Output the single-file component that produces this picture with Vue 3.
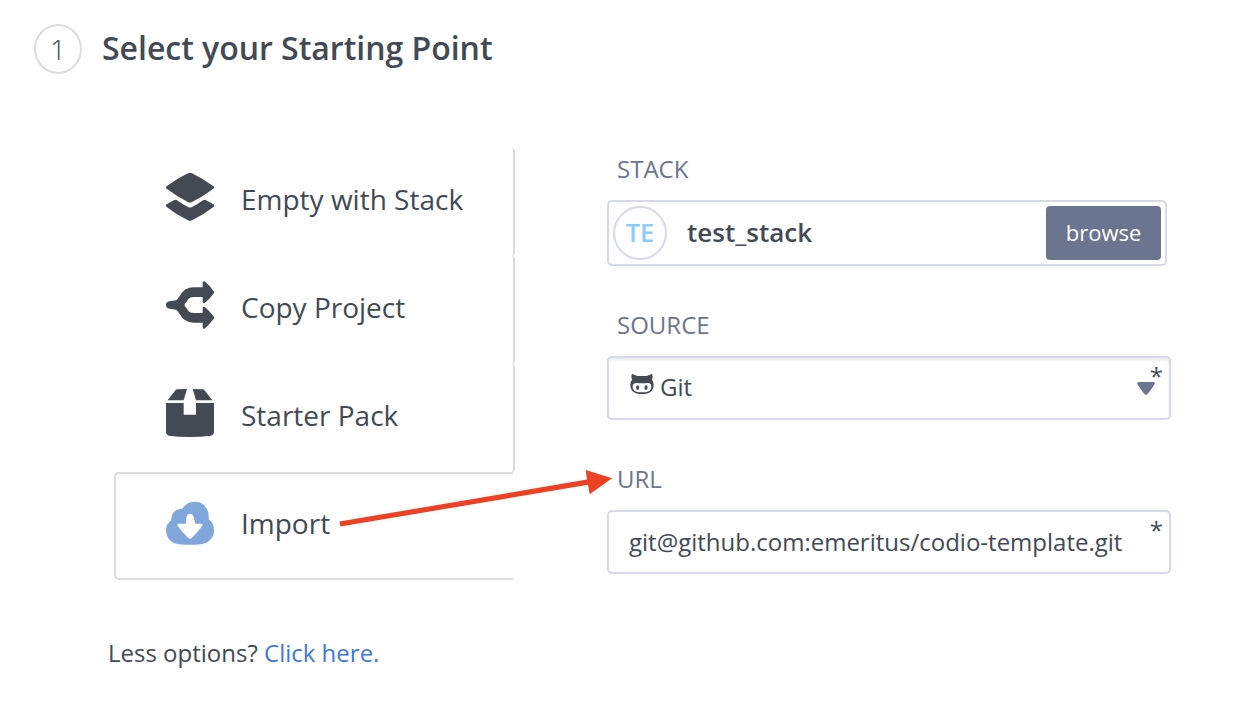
<script setup>
const options = [
  { id: 'stack', label: 'Empty with Stack' },
  { id: 'copy', label: 'Copy Project' },
  { id: 'pack', label: 'Starter Pack' },
  { id: 'import', label: 'Import' },
]
const selected = 'import'
</script>

<template>
  <main class="page">
    <header class="heading">
      <span class="step">1</span>
      <h1>Select your Starting Point</h1>
    </header>

    <div class="columns">
      <nav class="menu">
        <div v-for="o in options" :key="o.id" class="option" :class="{ active: o.id === selected }">
          <svg v-if="o.id === 'stack'" class="icon" viewBox="48 69 144 144">
            <path d="M114 70Q120 67 126 70Q160 86 190 109Q195 112 190 116Q160 139 126 156Q120 159 114 156Q80 139 50 116Q45 112 50 109Q80 86 114 70Z" />
            <path d="M50 163L73 150Q77 148 81 151Q97 163 114 171Q120 174 126 171Q143 163 159 151Q163 148 167 150L190 163Q195 167 190 171Q160 195 126 211Q120 214 114 211Q80 195 50 171Q45 167 50 163Z" />
          </svg>
          <svg v-else-if="o.id === 'copy'" class="icon" viewBox="48 63 144 144">
            <path d="M58 124L78 121Q84 117 89 108Q103 82 130 82H158V68Q158 62 164 64Q178 76 190 92Q194 97 190 102Q178 118 164 129Q158 131 158 125V111H130Q120 111 115 117Q110 127 104 131V139Q110 143 115 153Q120 159 130 159H158V145Q158 139 164 141Q178 152 190 168Q194 173 190 178Q178 194 164 206Q158 208 158 202V188H130Q103 188 89 162Q84 153 78 149L58 146Q48 144 48 135Q48 126 58 124Z" />
          </svg>
          <svg v-else-if="o.id === 'pack'" class="icon" viewBox="48 57 144 144">
            <path d="M53 91L75 62Q78 58 83 58L111 57L101 91ZM128 57L157 58Q162 58 165 62L187 91H138Z" />
            <path d="M48 99H101V134H138V99H192V187Q192 195 184 197Q152 201 120 201Q88 201 56 197Q48 195 48 187Z" />
          </svg>
          <svg v-else class="icon" viewBox="198 118 144 144">
            <path fill-rule="evenodd" d="M214 181C213 159 228 147 246 148C255 134 268 126 285 126C312 126 329 149 326 179C336 186 342 198 342 211C342 236 324 252 302 254Q270 257 237 254C215 252 198 236 198 212C198 199 204 189 214 181ZM258 192H238Q230 192 233 198Q247 218 265 235Q270 240 275 235Q293 218 307 198Q310 192 302 192H286Q283 181 280 169Q277 162 270 162Q263 162 260 169Q258 178 258 192Z" />
          </svg>
          <span>{{ o.label }}</span>
        </div>
      </nav>

      <section class="form">
        <label class="caption">STACK</label>
        <div class="stack-box">
          <span class="avatar">TE</span>
          <strong>test_stack</strong>
          <button>browse</button>
        </div>

        <label class="caption source">SOURCE</label>
        <div class="field select">
          <svg class="cat" viewBox="120 222 70 60">
            <path fill-rule="evenodd" d="M124 224Q124 221 128 223L141 228H169L182 223Q186 221 186 225Q188 232 185 239Q190 245 190 254Q190 282 155 282Q120 282 120 254Q120 245 125 239Q122 232 124 224ZM155 250C143 250 127 245 127 260C127 274 139 277 155 277S183 274 183 260C183 245 167 250 155 250Z" />
            <ellipse cx="142" cy="263" rx="4.5" ry="7" />
            <ellipse cx="167" cy="263" rx="4.5" ry="7" />
          </svg>
          <span>Git</span>
          <svg class="caret" viewBox="0 0 52 38">
            <path d="M4 0H48Q54 2 50 8Q42 22 31 34Q26 40 21 34Q10 22 2 8Q-2 2 4 0Z" />
          </svg>
          <i class="star">*</i>
        </div>

        <label class="caption url">URL</label>
        <div class="field address">
          <span>git@github.com:emeritus/codio-template.git</span>
          <i class="star">*</i>
        </div>
      </section>
    </div>

    <footer>Less options? <a>Click here.</a></footer>

    <svg class="pointer" viewBox="335 465 282 64">
      <path d="M339.5 521.6L587 479.6L585.7 470L612 478.2L589.7 494.2L588 484.8L340.4 526.6Z" />
    </svg>
  </main>
</template>

<style>
body {
  background: #fefefe;
}
</style>

<style scoped>
* {
  box-sizing: border-box;
}
.page {
  position: relative;
  width: 1240px;
  height: 704px;
  padding: 24px 0 0 34px;
  overflow: hidden;
  background: #fefefe;
  color: #434a54;
  font-family: "Open Sans", sans-serif;
  font-size: 24px;
}
.heading {
  display: flex;
  align-items: center;
  gap: 20px;
  height: 50px;
}
.step {
  width: 48px;
  height: 50px;
  border: 2px solid #dcdcdc;
  border-radius: 50%;
  font-size: 28px;
  font-weight: 300;
  line-height: 46px;
  text-align: center;
}
h1 {
  margin: 0 0 2px;
  font-size: 32px;
  font-weight: 600;
  line-height: 48px;
  letter-spacing: -0.02px;
  white-space: nowrap;
}
.columns {
  display: grid;
  grid-template-columns: 401px 564px;
  gap: 92px;
  margin: 74px 0 0 80px;
  height: 432px;
}
.option {
  display: flex;
  align-items: center;
  height: 108px;
  padding: 0 0 10px 52px;
  border-right: 2px solid #dcdcdc;
  border-radius: 3px;
  font-size: 28px;
  white-space: nowrap;
}
.option span {
  padding-top: 3px;
}
.option.active {
  width: 399px;
  padding: 0 0 6px 50px;
  border: 2px solid #dcdcdc;
  border-right: 0;
  border-radius: 5px 2px 2px 5px;
}
.option.active span {
  padding-bottom: 1px;
  padding-top: 0;
}
.icon {
  flex: none;
  width: 48px;
  height: 48px;
  margin-right: 27px;
  fill: #434a54;
}
.active .icon {
  fill: #80a6dc;
}
.form {
  display: flex;
  flex-direction: column;
}
.caption {
  height: 32px;
  margin: 5px 0 15px 10px;
  color: #6b758f;
  line-height: 32px;
}
.caption.source {
  margin: 43px 0 15px 10px;
}
.caption.url {
  margin: 43px 0 15px 10px;
}
.stack-box {
  display: flex;
  align-items: center;
  width: 560px;
  height: 66px;
  padding: 0 4px;
  border: 2px solid #d6d9e6;
  border-radius: 5px;
}
.avatar {
  width: 54px;
  height: 54px;
  border: 2px solid #d6d9e6;
  border-radius: 50%;
  color: #8ecaf8;
  font-size: 25.5px;
  font-weight: 600;
  line-height: 48px;
  text-align: center;
}
strong {
  flex: 1;
  margin-left: 20px;
  padding-bottom: 2px;
  font-size: 26px;
  font-weight: 600;
}
button {
  width: 115px;
  height: 54px;
  padding: 0 0 2px;
  border: 0;
  border-radius: 4px;
  background: #6b758f;
  color: #fff;
  font: 22px "Open Sans", sans-serif;
}
.field {
  position: relative;
  display: flex;
  align-items: center;
  width: 564px;
  height: 64px;
  padding: 0 20px;
  border: 2px solid #d6d9e6;
  border-radius: 5px;
  white-space: nowrap;
}
.address {
  padding-bottom: 2px;
}
.select {
  padding-bottom: 3px;
  box-shadow: inset 0 3px 3px -1px #e9e9ed;
}
.cat {
  width: 24px;
  height: 20px;
  margin: 0 6px 6px 1px;
  fill: #434a54;
}
.caret {
  position: absolute;
  top: 24px;
  right: 14px;
  width: 18px;
  height: 13px;
  fill: #6b758f;
}
.star {
  position: absolute;
  top: 2px;
  right: 6px;
  font-style: normal;
  font-weight: 500;
  line-height: 32px;
}
footer {
  margin: 57px 0 0 74px;
  line-height: 32px;
}
a {
  color: #4078e0;
}
.pointer {
  position: absolute;
  top: 465px;
  left: 335px;
  width: 282px;
  height: 64px;
  fill: #ee4023;
}
</style>
